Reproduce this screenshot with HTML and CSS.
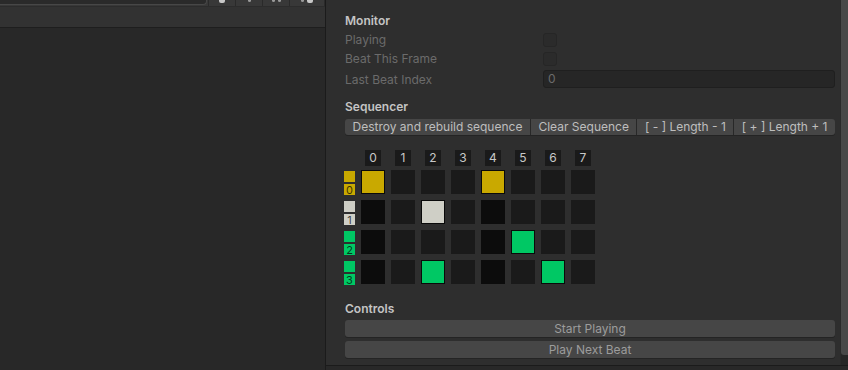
FILE: index.html
```html
<!DOCTYPE html>
<html lang="en">
<head>
  <meta charset="UTF-8">
  <meta name="viewport" content="width=device-width, initial-scale=1.0">
  <title>Beat Sequencer Inspector</title>
  <link rel="stylesheet" href="styles.css">
</head>
<body>
  <div class="app">
    <!-- Hierarchy panel (left) -->
    <div class="hierarchy">
      <div class="toolbar">
        <div class="search"></div>
        <div class="tool-btns">
          <span class="tool"><i class="bit wide"></i></span>
          <span class="tool"><i class="bit"></i></span>
          <span class="tool"><i class="bit"></i><i class="bit"></i></span>
          <span class="tool last"><i class="bit"></i><i class="bit wide"></i></span>
        </div>
      </div>
      <div class="scene-header"></div>
      <div class="scene-body"></div>
    </div>

    <!-- Inspector panel (right) -->
    <div class="inspector">
      <div class="inspector-view">
        <div class="inspector-content">
          <div class="header">Monitor</div>
          <div class="field"><label>Playing</label><span class="checkbox"></span></div>
          <div class="field"><label>Beat This Frame</label><span class="checkbox"></span></div>
          <div class="field tall"><label>Last Beat Index</label><span class="text-input">0</span></div>

          <div class="header section">Sequencer</div>
          <div class="btn-row">
            <span class="btn">Destroy and rebuild sequence</span>
            <span class="btn">Clear Sequence</span>
            <span class="btn">[ - ] Length - 1</span>
            <span class="btn">[ + ] Length + 1</span>
          </div>

          <div class="seq">
            <div class="seq-head">
              <span></span>
              <span class="col-num">0</span>
              <span class="col-num">1</span>
              <span class="col-num">2</span>
              <span class="col-num">3</span>
              <span class="col-num">4</span>
              <span class="col-num">5</span>
              <span class="col-num">6</span>
              <span class="col-num">7</span>
            </div>
            <div class="seq-grid">
              <!-- track 0 -->
              <div class="row-label t-yellow"><span class="swatch"></span><span class="num">0</span></div>
              <span class="cell on t-yellow"></span>
              <span class="cell"></span>
              <span class="cell"></span>
              <span class="cell"></span>
              <span class="cell on t-yellow"></span>
              <span class="cell"></span>
              <span class="cell"></span>
              <span class="cell"></span>
              <!-- track 1 -->
              <div class="row-label t-light"><span class="swatch"></span><span class="num">1</span></div>
              <span class="cell beat"></span>
              <span class="cell"></span>
              <span class="cell on t-light"></span>
              <span class="cell"></span>
              <span class="cell beat"></span>
              <span class="cell"></span>
              <span class="cell"></span>
              <span class="cell"></span>
              <!-- track 2 -->
              <div class="row-label t-green"><span class="swatch"></span><span class="num">2</span></div>
              <span class="cell beat"></span>
              <span class="cell"></span>
              <span class="cell"></span>
              <span class="cell"></span>
              <span class="cell beat"></span>
              <span class="cell on t-green"></span>
              <span class="cell"></span>
              <span class="cell"></span>
              <!-- track 3 -->
              <div class="row-label t-green"><span class="swatch"></span><span class="num">3</span></div>
              <span class="cell beat"></span>
              <span class="cell"></span>
              <span class="cell on t-green"></span>
              <span class="cell"></span>
              <span class="cell beat"></span>
              <span class="cell"></span>
              <span class="cell on t-green"></span>
              <span class="cell"></span>
            </div>
          </div>

          <div class="header controls">Controls</div>
          <div class="wide-btn">Start Playing</div>
          <div class="wide-btn">Play Next Beat</div>
        </div>
        <div class="scrollbar"><div class="thumb"></div></div>
      </div>
      <div class="inspector-foot"></div>
    </div>
  </div>
</body>
</html>
```

FILE: styles.css
```css
body {
  margin: 0;
  background-color: #282828;
  font-family: Inter, "Noto Sans", sans-serif;
  font-size: 12px;
}

.app {
  display: flex;
  height: 370px;
  overflow: hidden;
}

/* Hierarchy */
.hierarchy {
  width: 325px;
  border-right: 1px solid #1b1b1b;
  display: flex;
  flex-direction: column;
  background-color: #282828;
}

.toolbar {
  height: 6px;
  display: flex;
  background-color: #383838;
  border-bottom: 1px solid #2c2c2c;
  overflow: hidden;
}

.search {
  width: 211px;
  height: 5px;
  margin-left: -4px;
  box-sizing: border-box;
  background-color: #2a2a2a;
  border: 1px solid #474747;
  border-top: none;
  border-radius: 0 0 4px 4px;
}

.tool-btns {
  display: flex;
  margin-left: 1px;
  flex: 1;
}

.tool {
  width: 26px;
  border-left: 1px solid #2a2a2a;
  display: flex;
  justify-content: center;
  gap: 3px;
}

.tool.last {
  flex: 1;
  border-right: 1px solid #2a2a2a;
}

.bit {
  width: 3px;
  height: 2px;
  background-color: #9a9a9a;
  border-radius: 0 0 2px 2px;
}

.bit.wide {
  width: 6px;
  height: 3px;
  background-color: #c8c8c8;
}

.scene-header {
  height: 20px;
  background-color: #323232;
  border-bottom: 1px solid #1e1e1e;
}

.scene-body {
  flex: 1;
}

/* Inspector */
.inspector {
  flex: 1;
  display: flex;
  flex-direction: column;
}

.inspector-view {
  height: 366px;
  box-sizing: border-box;
  display: flex;
  background-color: #2e2e2e;
  border-bottom: 1px solid #1b1b1b;
}

.inspector-content {
  flex: 1;
  padding: 11px 5px 0 19px;
}

.scrollbar {
  width: 7px;
  border-left: 1px solid #2a2a2a;
  background-color: #262626;
}

.thumb {
  height: 355px;
  background-color: #484848;
  border-radius: 0 0 0 3px;
}

.inspector-foot {
  flex: 1;
  background-color: #282828;
}

.header {
  height: 19px;
  line-height: 19px;
  font-weight: 600;
  color: #c4c4c4;
}

.header.section {
  margin-top: 7px;
}

.header.controls {
  margin-top: 15px;
}

.field {
  display: flex;
  align-items: center;
  height: 19px;
  color: #6b6b6b;
}

.field.tall {
  height: 22px;
}

.field label {
  width: 198px;
}

.checkbox {
  width: 14px;
  height: 14px;
  box-sizing: border-box;
  background-color: #2b2b2b;
  border: 1px solid #262626;
  border-radius: 3px;
}

.text-input {
  flex: 1;
  height: 18px;
  box-sizing: border-box;
  line-height: 16px;
  padding-left: 4px;
  background-color: #262626;
  border: 1px solid #1f1f1f;
  border-radius: 3px;
  color: #6b6b6b;
}

.btn-row {
  display: flex;
  margin-top: 3px;
  height: 16px;
}

.btn {
  flex: auto;
  padding: 0 6px;
  text-align: center;
  line-height: 16px;
  white-space: nowrap;
  background-color: #464646;
  color: #bebebe;
  border-right: 1px solid #282828;
  box-shadow: 0 1px 0 #242424;
}

.btn:first-child {
  border-radius: 3px 0 0 3px;
}

.btn:last-child {
  border-right: none;
  border-radius: 0 3px 3px 0;
}

/* Sequencer grid */
.seq {
  margin-top: 15px;
  margin-left: -1px;
}

.seq-head, .seq-grid {
  display: grid;
  grid-template-columns: 11px repeat(8, 24px);
  column-gap: 6px;
}

.seq-head {
  margin-bottom: 4px;
}

.seq-grid {
  grid-auto-rows: 24px;
  row-gap: 6px;
}

.col-num {
  justify-self: center;
  width: 16px;
  height: 16px;
  line-height: 16px;
  text-align: center;
  background-color: #1a1a1a;
  color: #c8c8c8;
}

.row-label {
  display: flex;
  flex-direction: column;
  gap: 2px;
  padding-top: 1px;
}

.swatch, .num {
  flex: none;
  width: 11px;
  height: 11px;
}

.num {
  font-size: 11px;
  line-height: 12px;
  text-align: center;
  color: rgba(0, 0, 0, 0.72);
}

.row-label.t-yellow .swatch, .row-label.t-yellow .num { background-color: #c9a900; }
.row-label.t-light .swatch, .row-label.t-light .num { background-color: #cfcfc6; }
.row-label.t-green .swatch, .row-label.t-green .num { background-color: #00c864; }

.cell {
  height: 24px;
  box-sizing: border-box;
  background-color: #1a1a1a;
}

.cell.beat {
  background-color: #0c0c0c;
}

.cell.on {
  border: 1px solid #0a0a0a;
}

.cell.on.t-yellow { background-color: #c9a900; }
.cell.on.t-light { background-color: #cfcfc6; }
.cell.on.t-green { background-color: #00c864; }

/* Controls */
.wide-btn {
  height: 17px;
  line-height: 17px;
  margin-top: 2px;
  text-align: center;
  background-color: #464646;
  color: #9c9c9c;
  border-radius: 3px;
  box-shadow: 0 1px 0 #242424;
}

.wide-btn + .wide-btn {
  margin-top: 4px;
}
```
